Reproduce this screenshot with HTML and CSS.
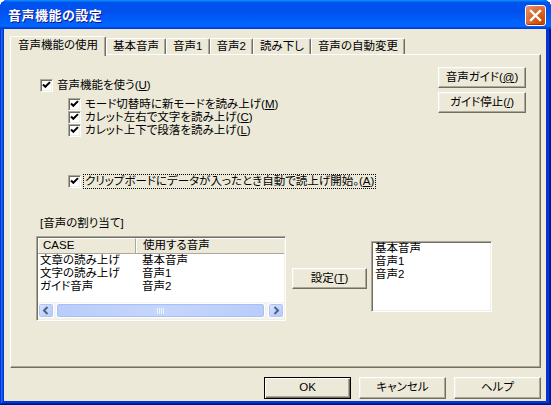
FILE: index.html
```html
<!DOCTYPE html>
<html lang="ja">
<head>
<meta charset="utf-8">
<title>音声機能の設定</title>
<link rel="stylesheet" href="styles.css">
</head>
<body>
<div class="window">
  <div class="titlebar">
    <span class="title">音声機能の設定</span>
    <span class="close">
      <svg width="13" height="13" viewBox="0 0 13 13"><path d="M2 2 L11 11 M11 2 L2 11" stroke="#fff" stroke-width="2.4" stroke-linecap="square"/></svg>
    </span>
  </div>
  <div class="client">
    <div class="tabs">
      <div class="tab active">音声機能の使用</div>
      <div class="tab">基本音声</div>
      <div class="tab">音声1</div>
      <div class="tab">音声2</div>
      <div class="tab">読み下し</div>
      <div class="tab">音声の自動変更</div>
    </div>
    <div class="panel">
      <div class="top">
        <div class="checks">
          <div class="cb main-cb">
            <span class="box"><svg width="9" height="9" viewBox="0 0 9 9"><path d="M1 3.5 L3.3 5.8 L8 1.1" fill="none" stroke="#000" stroke-width="2"/></svg></span>
            <span class="lbl">音声機能を使う(<u>U</u>)</span>
          </div>
          <div class="sub">
            <div class="cb">
              <span class="box"><svg width="9" height="9" viewBox="0 0 9 9"><path d="M1 3.5 L3.3 5.8 L8 1.1" fill="none" stroke="#000" stroke-width="2"/></svg></span>
              <span class="lbl">モード切替時に新モードを読み上げ(<u>M</u>)</span>
            </div>
            <div class="cb">
              <span class="box"><svg width="9" height="9" viewBox="0 0 9 9"><path d="M1 3.5 L3.3 5.8 L8 1.1" fill="none" stroke="#000" stroke-width="2"/></svg></span>
              <span class="lbl">カレット左右で文字を読み上げ(<u>C</u>)</span>
            </div>
            <div class="cb">
              <span class="box"><svg width="9" height="9" viewBox="0 0 9 9"><path d="M1 3.5 L3.3 5.8 L8 1.1" fill="none" stroke="#000" stroke-width="2"/></svg></span>
              <span class="lbl">カレット上下で段落を読み上げ(<u>L</u>)</span>
            </div>
          </div>
          <div class="cb clip-cb">
            <span class="box"><svg width="9" height="9" viewBox="0 0 9 9"><path d="M1 3.5 L3.3 5.8 L8 1.1" fill="none" stroke="#000" stroke-width="2"/></svg></span>
            <span class="lbl focus">クリップボードにデータが入ったとき自動で読上げ開始。(<u>A</u>)</span>
          </div>
        </div>
        <div class="side-buttons">
          <div class="btn side-btn">音声ガイド(<u>@</u>)</div>
          <div class="btn side-btn">ガイド停止(<u>/</u>)</div>
        </div>
      </div>
      <div class="assign">
        <div class="assign-label">[音声の割り当て]</div>
        <div class="assign-row">
          <div class="listview">
            <div class="lv-header">
              <div class="lv-col1">CASE</div>
              <div class="lv-col2">使用する音声</div>
            </div>
            <div class="lv-body">
              <div class="lv-row"><span class="lv-c1">文章の読み上げ</span><span class="lv-c2">基本音声</span></div>
              <div class="lv-row"><span class="lv-c1">文字の読み上げ</span><span class="lv-c2">音声1</span></div>
              <div class="lv-row"><span class="lv-c1">ガイド音声</span><span class="lv-c2">音声2</span></div>
            </div>
            <div class="hscroll">
              <div class="sb-btn"><svg width="8" height="9" viewBox="0 0 8 9"><path d="M5.5 1 L2 4.5 L5.5 8" fill="none" stroke="#4d6185" stroke-width="2"/></svg></div>
              <div class="sb-thumb"><span class="grip"></span></div>
              <div class="sb-btn"><svg width="8" height="9" viewBox="0 0 8 9"><path d="M2.5 1 L6 4.5 L2.5 8" fill="none" stroke="#4d6185" stroke-width="2"/></svg></div>
            </div>
          </div>
          <div class="btn set-btn">設定(<u>T</u>)</div>
          <div class="listbox">
            <div class="lb-item">基本音声</div>
            <div class="lb-item">音声1</div>
            <div class="lb-item">音声2</div>
          </div>
        </div>
      </div>
    </div>
    <div class="footer">
      <div class="btn foot-btn default">OK</div>
      <div class="btn foot-btn">キャンセル</div>
      <div class="btn foot-btn">ヘルプ</div>
    </div>
  </div>
</div>
</body>
</html>
```

FILE: styles.css
```css
* { box-sizing: border-box; }
html, body { margin: 0; padding: 0; background: #fff; }
body {
  width: 551px;
  height: 405px;
  overflow: hidden;
  font-family: "Liberation Sans", "Noto Sans CJK JP", sans-serif;
  font-size: 11.5px;
  color: #000;
  font-feature-settings: "palt";
}
u { text-decoration: underline; text-underline-offset: 1px; }

.window {
  width: 551px;
  height: 405px;
  display: flex;
  flex-direction: column;
  border-radius: 8px 8px 0 0;
  background: #0831d9;
  box-shadow: inset -1px -1px #00138c, inset 1px 1px #0831d9, inset -2px -2px #001ea0, inset 2px 2px #166aee, inset -3px -3px #003bda, inset 3px 3px #0855dd;
}

.titlebar {
  height: 29px;
  flex: none;
  display: flex;
  align-items: center;
  justify-content: space-between;
  padding: 2px 5px 0 8px;
  border-radius: 8px 8px 0 0;
  background: linear-gradient(180deg, #0997ff 0, #0053ee 8%, #0050ee 40%, #0066ff 86%, #0066ff 90%, #005bff 93%, #003dd7 96%, #003dd7 100%);
}
.title {
  color: #fff;
  font-size: 13px;
  font-weight: bold;
  letter-spacing: 0.5px;
  text-shadow: 1px 1px #0f1089;
  line-height: 1;
}
.close {
  width: 21px;
  height: 21px;
  border: 1px solid #fff;
  border-radius: 3px;
  display: flex;
  align-items: center;
  justify-content: center;
  background: radial-gradient(circle at 85% 85%, #cc4600 0, #dc6527 50%, #e68b6c 90%), #e0542e;
  box-shadow: inset 0 -1px 1px #a52c08;
}

.client {
  flex: 1;
  margin: 0 5px 4px 4px;
  background: #ece9d8;
  padding: 7px 5px 0 6px;
  display: flex;
  flex-direction: column;
}

.tabs {
  display: flex;
  align-items: flex-end;
  height: 18px;
  position: relative;
  z-index: 2;
}
.tab {
  height: 16px;
  padding: 0 6px;
  display: flex;
  align-items: center;
  justify-content: center;
  background: #ece9d8;
  border-top: 1px solid #fff;
  border-left: 1px solid #fff;
  border-right: 1px solid #716f64;
  border-radius: 2px 2px 0 0;
  box-shadow: inset -1px 0 #aca899;
  white-space: nowrap;
  line-height: 1;
}
.tab.active {
  height: 20px;
  margin-bottom: -2px;
  padding: 0 7px 2px;
}

.panel {
  height: 314px;
  flex: none;
  border: 1px solid;
  border-color: #fff #716f64 #716f64 #fff;
  box-shadow: inset -1px -1px #aca899;
  padding: 12px 14px 0 25px;
}

.top {
  display: flex;
  justify-content: space-between;
  align-items: flex-start;
}
.checks {
  padding: 11px 0 0 4px;
}
.cb {
  display: flex;
  align-items: center;
  height: 13px;
  white-space: nowrap;
}
.main-cb { height: 14px; }
.box {
  width: 13px;
  height: 13px;
  flex: none;
  background: #fff;
  border: 1px solid;
  border-color: #aca899 #fff #fff #aca899;
  box-shadow: inset 1px 1px #716f64, inset -1px -1px #f1efe2;
  display: flex;
  align-items: center;
  justify-content: center;
  margin-right: 4px;
}
.lbl { line-height: 13px; }
.sub {
  margin-top: 6px;
  padding-left: 28px;
}
.clip-cb {
  margin-top: 37px;
  margin-left: 28px;
  height: 14px;
}
.focus {
  outline: 1px dotted #000;
  padding: 0 1px;
  margin-left: -1px;
  line-height: 13px;
}

.side-buttons {
  display: flex;
  flex-direction: column;
  gap: 4px;
}

.btn {
  display: flex;
  align-items: center;
  justify-content: center;
  background: #ece9d8;
  border: 1px solid;
  border-color: #fff #716f64 #716f64 #fff;
  box-shadow: inset -1px -1px #aca899, inset 1px 1px #f1efe2;
  white-space: nowrap;
  line-height: 1;
}
.side-btn { width: 88px; height: 21px; }

.assign { margin-top: 28px; }
.assign-label {
  padding-left: 4px;
  height: 15px;
  line-height: 14px;
}
.assign-row {
  display: flex;
  align-items: flex-start;
  margin-top: 5px;
}

.listview {
  width: 250px;
  height: 85px;
  background: #fff;
  border: 1px solid;
  border-color: #aca899 #fff #fff #aca899;
  box-shadow: inset 1px 1px #716f64, inset -1px -1px #f1efe2;
  padding: 1px 0 1px 1px;
  display: flex;
  flex-direction: column;
}
.lv-header {
  height: 16px;
  display: flex;
  flex: none;
  background: #ece9d8;
  border-bottom: 1px solid #aca899;
  margin-right: 1px;
}
.lv-col1, .lv-col2 {
  display: flex;
  align-items: center;
  padding-left: 4px;
  border-top: 1px solid #fff;
  border-left: 1px solid #fff;
  border-right: 1px solid #aca899;
  line-height: 1;
}
.lv-col1 { width: 98px; }
.lv-col2 { flex: 1; padding-left: 6px; border-right: none; }
.lv-body { flex: 1; }
.lv-row {
  display: flex;
  height: 13px;
  line-height: 13px;
  white-space: nowrap;
}
.lv-c1 { width: 103px; padding-left: 2px; }
.lv-c2 { padding-left: 1px; }

.hscroll {
  height: 17px;
  flex: none;
  display: flex;
  align-items: stretch;
  margin-right: 1px;
  background: #f4f3ee;
  padding: 1px 0;
}
.sb-btn {
  width: 16px;
  flex: none;
  display: flex;
  align-items: center;
  justify-content: center;
  border: 1px solid #fff;
  border-radius: 3px;
  background: linear-gradient(135deg, #dde7fe 0, #c6d6fc 45%, #b4c9f9 100%);
  box-shadow: inset 0 0 0 1px #b1c5f4;
}
.sb-thumb {
  flex: 1;
  margin: 0 3px 0 2px;
  border: 1px solid #fff;
  border-radius: 3px;
  background: linear-gradient(90deg, #b8cdfb 0, #c5d6fd 50%, #b8cdfb 100%);
  box-shadow: inset 0 0 0 1px #a9c0f5;
  display: flex;
  align-items: center;
  justify-content: center;
}
.grip {
  width: 7px;
  height: 6px;
  background: repeating-linear-gradient(90deg, #eef3ff 0 1px, transparent 1px 2px);
}

.set-btn {
  width: 75px;
  height: 21px;
  margin: 32px 0 0 6px;
}

.listbox {
  width: 121px;
  height: 71px;
  margin: 5px 0 0 4px;
  background: #fff;
  border: 1px solid;
  border-color: #aca899 #fff #fff #aca899;
  box-shadow: inset 1px 1px #716f64, inset -1px -1px #f1efe2;
  padding: 0 3px;
}
.lb-item { height: 13px; line-height: 13px; white-space: nowrap; }

.footer {
  display: flex;
  justify-content: flex-end;
  gap: 8px;
  padding-top: 9px;
}
.foot-btn { width: 87px; height: 22px; }
.foot-btn.default {
  border: 1px solid #000;
  box-shadow: inset 1px 1px #fff, inset -1px -1px #716f64, inset -2px -2px #aca899;
}
```
